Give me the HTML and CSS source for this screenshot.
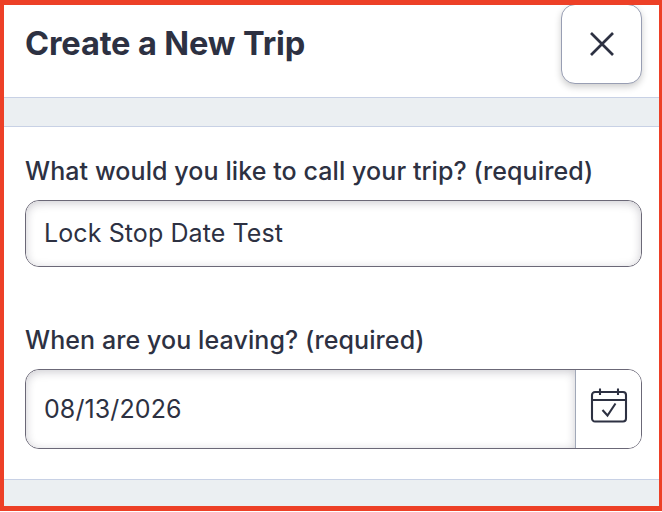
FILE: index.html
```
<!DOCTYPE html>
<html lang="en">
<head>
<meta charset="utf-8">
<title>Create a New Trip</title>
<link rel="stylesheet" href="styles.css">
</head>
<body>
<main class="panel">
  <header class="header">
    <h1 class="title">Create a New Trip</h1>
    <button class="close" aria-label="Close"><svg width="26" height="26" viewBox="0 0 26 26"><path d="M2 2 24 24M24 2 2 24"/></svg></button>
  </header>
  <div class="band"></div>
  <form class="form">
    <label class="label" for="name">What would you like to call your trip? (required)</label>
    <div class="field"><input class="input" id="name" type="text" value="Lock Stop Date Test"></div>
    <label class="label label-date" for="date">When are you leaving? (required)</label>
    <div class="field field-date">
      <input class="input" id="date" type="text" value="08/13/2026">
      <button class="calendar" type="button" aria-label="Choose date"><svg width="38" height="36" viewBox="0 0 38 36"><rect x="2" y="4" width="34" height="29.5" rx="3"/><path d="M2 12H36M10 .5V7M28 .5V7"/><path d="M12.5 22 17.5 27.5 25.5 15.5"/></svg></button>
    </div>
  </form>
</main>
</body>
</html>
```
FILE: styles.css
```
* { box-sizing: border-box; }
body { margin: 0; font-family: Inter, sans-serif; color: #2d3142; background: #fff; }
.panel { height: 511px; border: solid #ed4027; border-width: 5px 3px 5px 4px; background: #ebeff2; overflow: hidden; }
.header { height: 92px; display: flex; justify-content: space-between; align-items: flex-start; background: #fff; padding: 0 17px 0 21px; }
.title { margin: 18px 0 0; font-size: 32.6px; line-height: 40px; font-weight: 700; letter-spacing: -0.14px; white-space: nowrap; }
.close { width: 81px; height: 80px; margin-top: -1px; padding: 0; border: 1px solid #989eb3; border-radius: 14px; background: #fff; box-shadow: 0 3px 7px #0003; display: flex; align-items: center; justify-content: center; }
svg { fill: none; stroke: #2d3142; stroke-width: 2.1; }
.close svg { stroke-width: 2.7; }
.band { height: 30px; border: solid #c8d1e5; border-width: 1px 0; }
.form { height: 353px; background: #fff; padding: 28px 17px 0 21px; border-bottom: 1px solid #c8d1e5; }
.label { display: block; height: 45px; font-size: 25px; line-height: 32px; font-weight: 500; letter-spacing: 0.09px; white-space: nowrap; }
.label-date { margin-top: 57px; }
.field { height: 67px; border: 1px solid #6b6877; border-radius: 14px; display: flex; overflow: hidden; }
.field-date { height: 80px; }
.input { flex: 1; min-width: 0; border: 0; border-radius: 13px; padding: 0 18px 2px; background: #fff; box-shadow: inset 0 2px 10px #1d182e38; font: 400 25px Inter, sans-serif; letter-spacing: 0.1px; color: #2d3142; outline: 0; }
.field-date .input { border-radius: 13px 0 0 13px; padding-bottom: 0; }
.calendar { width: 66px; border: 0; border-left: 1px solid #a1a8b8; background: #fff; padding: 0 0 6px; display: flex; align-items: center; justify-content: center; }
```
